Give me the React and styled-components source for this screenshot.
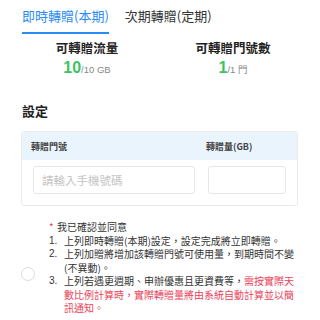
import React from "react";
import styled, { createGlobalStyle } from "styled-components";

const Global = createGlobalStyle`
  html, body { margin: 0; padding: 0; background: #fff; }
  body { font-family: "Noto Sans CJK TC", "Noto Sans", sans-serif; color: #333; width: 320px; height: 320px; overflow: hidden; }
  * { box-sizing: border-box; }
`;

const Page = styled.div`
  width: 320px;
  height: 320px;
  overflow: hidden;
`;

const Tabs = styled.div`
  display: flex;
  gap: 16px;
  padding-left: 22px;
`;

const Tab = styled.div`
  padding: 8px 0;
  font-size: 13px;
  line-height: 16px;
  color: ${(p) => (p.$active ? "#2a8cf2" : "#333")};
  border-bottom: 2px solid ${(p) => (p.$active ? "#2a8cf2" : "transparent")};
`;

const Stats = styled.div`
  display: grid;
  grid-template-columns: 1fr 1fr;
  padding: 6px 14px 0;
`;

const Stat = styled.div`
  display: flex;
  flex-direction: column;
  align-items: center;
`;

const StatTitle = styled.div`
  font-size: 12.5px;
  font-weight: 700;
  line-height: 16px;
  color: #222;
`;

const StatValue = styled.div`
  margin-top: 2px;
  line-height: 20px;
  display: flex;
  align-items: baseline;
`;

const Big = styled.span`
  font-family: "Liberation Sans", Arial, sans-serif;
  font-size: 16px;
  font-weight: 700;
  color: #3cc463;
`;

const Small = styled.span`
  font-family: "Liberation Sans", "Noto Sans CJK TC", sans-serif;
  font-size: 9.5px;
  color: #888;
`;

const SectionTitle = styled.div`
  margin: 22px 0 0 22px;
  font-size: 13px;
  font-weight: 700;
  line-height: 18px;
  color: #222;
`;

const Table = styled.div`
  margin: 11px 22px 0 21px;
  border: 1px solid #ebebeb;
  border-radius: 3px;
  overflow: hidden;
`;

const HeaderRow = styled.div`
  display: grid;
  grid-template-columns: 175px 1fr;
  align-items: center;
  height: 28px;
  padding-left: 9px;
  background: #eaf4fd;
  font-size: 9px;
  font-weight: 700;
  color: #444;
`;

const BodyRow = styled.div`
  display: grid;
  grid-template-columns: 162px 78px;
  gap: 13px;
  padding: 6px 11px 11px 11px;
`;

const Input = styled.input`
  height: 28px;
  width: 100%;
  border: 1px solid #e6e6e6;
  border-radius: 3px;
  padding: 0 0 0 8px;
  font-family: "Noto Sans CJK TC", sans-serif;
  font-size: 11.5px;
  color: #333;
  outline: none;
  &::placeholder { color: #c4c4c4; }
`;

const Agree = styled.div`
  display: flex;
  align-items: center;
  margin-top: 14px;
  padding-left: 21px;
`;

const Circle = styled.div`
  width: 14px;
  height: 14px;
  border-radius: 50%;
  border: 1px solid #dcdcdc;
  margin-top: 14px;
  flex: none;
`;

const Terms = styled.div`
  margin-left: 14px;
  width: 250px;
  font-size: 10px;
  line-height: 13.5px;
  color: #333;
`;

const Lead = styled.div`
  display: flex;
  gap: 3px;
`;

const Star = styled.span`
  color: #e8435a;
  width: 5px;
`;

const Item = styled.div`
  display: grid;
  grid-template-columns: 15px 233px;
`;

const Num = styled.span`
  font-family: "Liberation Sans", sans-serif;
`;

const Red = styled.span`
  color: #e8435a;
`;

export default function App() {
  return (
    <Page>
      <Global />
      <Tabs>
        <Tab $active>即時轉贈(本期)</Tab>
        <Tab>次期轉贈(定期)</Tab>
      </Tabs>
      <Stats>
        <Stat>
          <StatTitle>可轉贈流量</StatTitle>
          <StatValue>
            <Big>10</Big>
            <Small>/10 GB</Small>
          </StatValue>
        </Stat>
        <Stat>
          <StatTitle>可轉贈門號數</StatTitle>
          <StatValue>
            <Big>1</Big>
            <Small>/1 門</Small>
          </StatValue>
        </Stat>
      </Stats>
      <SectionTitle>設定</SectionTitle>
      <Table>
        <HeaderRow>
          <span>轉贈門號</span>
          <span>轉贈量(GB)</span>
        </HeaderRow>
        <BodyRow>
          <Input placeholder="請輸入手機號碼" />
          <Input />
        </BodyRow>
      </Table>
      <Agree>
        <Circle />
        <Terms>
          <Lead>
            <Star>*</Star>
            <span>我已確認並同意</span>
          </Lead>
          <Item>
            <Num>1.</Num>
            <span>上列即時轉贈(本期)設定，設定完成將立即轉贈。</span>
          </Item>
          <Item>
            <Num>2.</Num>
            <span>上列加贈將增加該轉贈門號可使用量，到期時間不變(不異動)。</span>
          </Item>
          <Item>
            <Num>3.</Num>
            <span>
              上列若遇更週期、申辦優惠且更資費等，
              <Red>需按實際天數比例計算時，實際轉贈量將由系統自動計算並以簡訊通知。</Red>
            </span>
          </Item>
        </Terms>
      </Agree>
    </Page>
  );
}
